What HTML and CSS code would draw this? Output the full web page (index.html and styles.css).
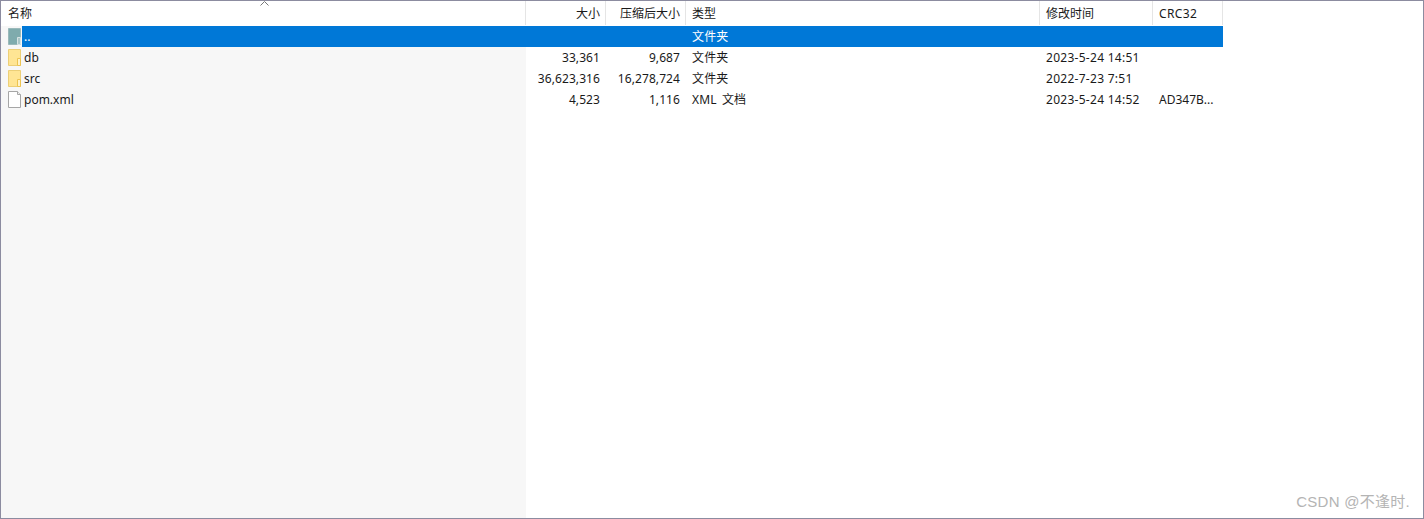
FILE: index.html
```html
<!DOCTYPE html>
<html lang="zh-CN">
<head>
<meta charset="utf-8">
<title>压缩包</title>
<link rel="stylesheet" href="styles.css">
</head>
<body>
<div class="window">
  <div class="row header">
    <div class="cell name sorted">名称<svg class="sort" width="9" height="5" viewBox="0 0 9 5"><path d="M0.5 4.5L4.5 0.5L8.5 4.5" fill="none" stroke="#777" stroke-width="1"/></svg></div>
    <div class="cell num">大小</div>
    <div class="cell num">压缩后大小</div>
    <div class="cell type">类型</div>
    <div class="cell time">修改时间</div>
    <div class="cell crc">CRC32</div>
  </div>
  <div class="list">
    <div class="row item selected">
      <div class="cell name"><svg class="icon" width="13" height="17" viewBox="0 0 13 17"><path d="M0.5 0.5H12.5V16.5H0.5Z" fill="#7fabad" stroke="#9ab9ba"/><path d="M9.5 16.5V9.5H12.5V16.5Z" fill="#a9c6c7" stroke="#d7e3e3"/></svg><span class="label">..</span></div>
      <div class="cell num"></div><div class="cell num"></div>
      <div class="cell type">文件夹</div><div class="cell time"></div><div class="cell crc"></div>
    </div>
    <div class="row item">
      <div class="cell name"><svg class="icon" width="13" height="17" viewBox="0 0 13 17"><path d="M0.5 0.5H12.5V16.5H0.5Z" fill="#ffe594" stroke="#eccf77"/><path d="M9.5 16.5V9.5H12.5V16.5Z" fill="#fff3c9" stroke="#edc451"/></svg><span class="label">db</span></div>
      <div class="cell num">33,361</div><div class="cell num">9,687</div>
      <div class="cell type">文件夹</div><div class="cell time">2023-5-24 14:51</div><div class="cell crc"></div>
    </div>
    <div class="row item">
      <div class="cell name"><svg class="icon" width="13" height="17" viewBox="0 0 13 17"><path d="M0.5 0.5H12.5V16.5H0.5Z" fill="#ffe594" stroke="#eccf77"/><path d="M9.5 16.5V9.5H12.5V16.5Z" fill="#fff3c9" stroke="#edc451"/></svg><span class="label">src</span></div>
      <div class="cell num">36,623,316</div><div class="cell num">16,278,724</div>
      <div class="cell type">文件夹</div><div class="cell time">2022-7-23 7:51</div><div class="cell crc"></div>
    </div>
    <div class="row item">
      <div class="cell name"><svg class="icon" width="13" height="17" viewBox="0 0 13 17"><path d="M0.5 0.5H9.5L12.5 3.5V16.5H0.5Z" fill="#fff" stroke="#a6a6a6"/><path d="M9.5 0.5V3.5H12.5" fill="#f0f0f0" stroke="#a6a6a6"/></svg><span class="label">pom.xml</span></div>
      <div class="cell num">4,523</div><div class="cell num">1,116</div>
      <div class="cell type">XML 文档</div><div class="cell time">2023-5-24 14:52</div><div class="cell crc">AD347B...</div>
    </div>
  </div>
  <div class="watermark">CSDN @不逢时.</div>
</div>
</body>
</html>
```
FILE: styles.css
```css
* { box-sizing: border-box; }
html, body { margin: 0; height: 100%; }
body {
  font-family: "Noto Sans", "Noto Sans CJK SC", sans-serif;
  font-size: 12px;
  color: #1a1a1a;
  background: #fff;
}
.window {
  position: relative;
  height: 519px;
  border: 1px solid #8c8ca0;
  display: flex;
  flex-direction: column;
  overflow: hidden;
}
.row {
  display: grid;
  grid-template-columns: 525px 80px 80px 354px 113px 70px;
  width: 1222px;
}
.header { height: 25px; flex: none; }
.header .cell {
  border-right: 1px solid #e5e5e5;
  height: 24px;
  line-height: 26px;
}
.header .crc { letter-spacing: 0.35px; }
.cell {
  padding: 0 5px 0 6px;
  white-space: nowrap;
  overflow: hidden;
}
.num { text-align: right; padding-right: 5px; }
.item .num { padding-right: 6px; letter-spacing: 0.08px; }
.item .time { letter-spacing: 0.28px; }
.item .type { line-height: 22px; word-spacing: 2px; letter-spacing: 0.15px; }
.sorted { position: relative; padding-left: 7px; }
.sort { position: absolute; left: 259px; top: 0; }
.list {
  flex: 1;
  background: linear-gradient(to right, #f7f7f7 525px, #fff 525px);
}
.item { height: 21px; line-height: 21px; }
.item .name {
  display: flex;
  align-items: center;
  padding-left: 7px;
}
.icon { flex: none; margin-right: 3px; }
.selected {
  background: linear-gradient(to right, transparent 21px, #0078d7 21px);
  color: #fff;
}
.watermark {
  position: absolute;
  right: 13px;
  bottom: 7px;
  font-family: "Liberation Sans", "Noto Sans CJK SC", sans-serif;
  font-size: 15px;
  letter-spacing: 0.27px;
  color: #b4b4b4;
}
```
